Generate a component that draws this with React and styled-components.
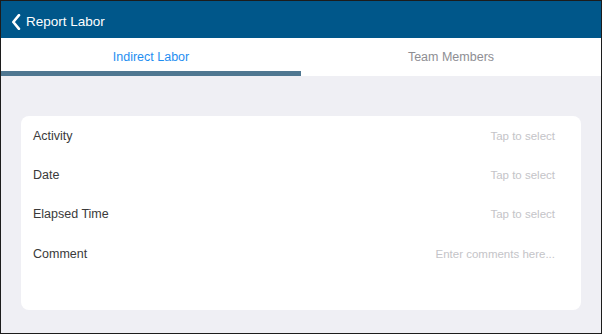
import React from "react";
import styled, { createGlobalStyle } from "styled-components";

const GlobalStyle = createGlobalStyle`
  body {
    margin: 0;
    font-family: "Liberation Sans", Arial, sans-serif;
    background: #ffffff;
  }
`;

const Frame = styled.div`
  width: 602px;
  height: 334px;
  box-sizing: border-box;
  border: 1px solid #1c1c1c;
  display: flex;
  flex-direction: column;
  background: #efeff4;
  overflow: hidden;
`;

const Header = styled.div`
  flex-shrink: 0;
  height: 37px;
  background: #00578a;
  display: flex;
  align-items: center;
  padding: 4px 0 0 10px;
  box-sizing: border-box;
  gap: 5px;
  color: #ffffff;
  font-size: 13.5px;
`;

const Tabs = styled.div`
  flex-shrink: 0;
  display: flex;
  background: #ffffff;
`;

const Tab = styled.div`
  flex: 1;
  height: 38px;
  box-sizing: border-box;
  display: flex;
  align-items: center;
  justify-content: center;
  padding-top: 4px;
  font-size: 12.5px;
  color: ${(p) => (p.active ? "#1f8ef1" : "#8e8e93")};
  border-bottom: 5px solid ${(p) => (p.active ? "#4f7791" : "transparent")};
`;

const Body = styled.div`
  flex: 1;
  min-height: 0;
  padding: 40px 20px 23px 20px;
  display: flex;
`;

const Card = styled.div`
  flex: 1;
  background: #ffffff;
  border-radius: 8px;
  padding: 0 26px 0 12px;
  display: flex;
  flex-direction: column;
`;

const Row = styled.div`
  height: 39px;
  flex-shrink: 0;
  display: flex;
  align-items: center;
  justify-content: space-between;

  &:last-child {
    padding-top: 1px;
  }
`;

const Label = styled.span`
  font-size: 12.5px;
  color: #3a3a3a;
`;

const Placeholder = styled.span`
  font-size: 11.5px;
  color: #c4c4c8;
`;

const rows = [
  ["Activity", "Tap to select"],
  ["Date", "Tap to select"],
  ["Elapsed Time", "Tap to select"],
  ["Comment", "Enter comments here..."],
];

export default function App() {
  return (
    <>
      <GlobalStyle />
      <Frame>
        <Header>
          <svg width="10" height="16" viewBox="0 0 10 16">
            <polyline
              points="8,1.2 2.3,8 8,14.8"
              fill="none"
              stroke="#ffffff"
              strokeWidth="2.6"
              strokeLinecap="round"
              strokeLinejoin="round"
            />
          </svg>
          <span>Report Labor</span>
        </Header>
        <Tabs>
          <Tab active>Indirect Labor</Tab>
          <Tab>Team Members</Tab>
        </Tabs>
        <Body>
          <Card>
            {rows.map(([label, hint]) => (
              <Row key={label}>
                <Label>{label}</Label>
                <Placeholder>{hint}</Placeholder>
              </Row>
            ))}
          </Card>
        </Body>
      </Frame>
    </>
  );
}
